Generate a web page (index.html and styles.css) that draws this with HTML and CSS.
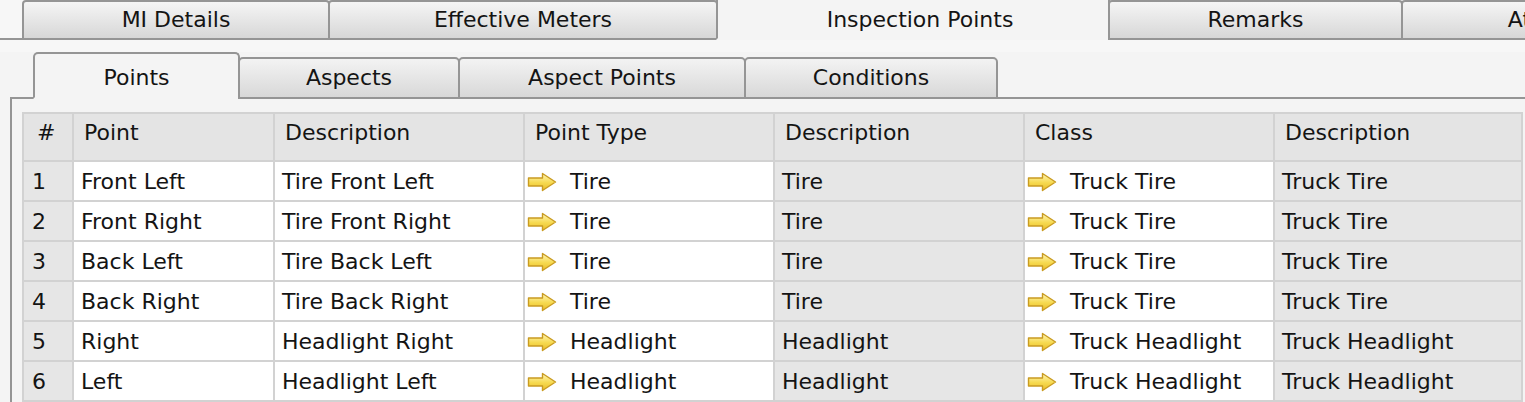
FILE: index.html
```html
<!DOCTYPE html>
<html lang="en">
<head>
  <meta charset="UTF-8">
  <title>Inspection Points</title>
  <meta name="viewport" content="width=device-width, initial-scale=1.0">
  <link rel="stylesheet" href="styles.css">
</head>
<body>

  <svg class="defs" width="0" height="0">
    <defs>
      <linearGradient id="arrow-fill" x1="0" y1="0" x2="0" y2="1">
        <stop offset="0" stop-color="#fff6b8"/>
        <stop offset="0.55" stop-color="#f6d94e"/>
        <stop offset="1" stop-color="#e9bd2a"/>
      </linearGradient>
      <symbol id="arrow" viewBox="0 0 30 20">
        <path d="M1.5 6 H15.5 V1.5 L28.5 10 L15.5 18.5 V14 H1.5 Z" fill="url(#arrow-fill)" stroke="#c99b22" stroke-width="1.4" stroke-linejoin="round"/>
      </symbol>
    </defs>
  </svg>

  <!-- onglets principaux -->
  <div class="tabs">
    <div class="tab tab-mi">MI Details</div>
    <div class="tab tab-meters">Effective Meters</div>
    <div class="tab tab-points active">Inspection Points</div>
    <div class="tab tab-remarks">Remarks</div>
    <div class="tab tab-attach">Attachments</div>
  </div>

  <div class="panel">
    <!-- sous-onglets -->
    <div class="subtabs">
      <div class="subtab sub-points active">Points</div>
      <div class="subtab sub-aspects">Aspects</div>
      <div class="subtab sub-apoints">Aspect Points</div>
      <div class="subtab sub-conditions">Conditions</div>
    </div>

    <div class="subpanel">
      <div class="grid">
        <div class="cell hd num">#</div>
        <div class="cell hd">Point</div>
        <div class="cell hd">Description</div>
        <div class="cell hd">Point Type</div>
        <div class="cell hd">Description</div>
        <div class="cell hd">Class</div>
        <div class="cell hd">Description</div>

        <div class="cell gray num">1</div>
        <div class="cell">Front Left</div>
        <div class="cell">Tire Front Left</div>
        <div class="cell link"><svg class="arrow"><use href="#arrow"/></svg>Tire</div>
        <div class="cell gray">Tire</div>
        <div class="cell link"><svg class="arrow"><use href="#arrow"/></svg>Truck Tire</div>
        <div class="cell gray">Truck Tire</div>

        <div class="cell gray num">2</div>
        <div class="cell">Front Right</div>
        <div class="cell">Tire Front Right</div>
        <div class="cell link"><svg class="arrow"><use href="#arrow"/></svg>Tire</div>
        <div class="cell gray">Tire</div>
        <div class="cell link"><svg class="arrow"><use href="#arrow"/></svg>Truck Tire</div>
        <div class="cell gray">Truck Tire</div>

        <div class="cell gray num">3</div>
        <div class="cell">Back Left</div>
        <div class="cell">Tire Back Left</div>
        <div class="cell link"><svg class="arrow"><use href="#arrow"/></svg>Tire</div>
        <div class="cell gray">Tire</div>
        <div class="cell link"><svg class="arrow"><use href="#arrow"/></svg>Truck Tire</div>
        <div class="cell gray">Truck Tire</div>

        <div class="cell gray num">4</div>
        <div class="cell">Back Right</div>
        <div class="cell">Tire Back Right</div>
        <div class="cell link"><svg class="arrow"><use href="#arrow"/></svg>Tire</div>
        <div class="cell gray">Tire</div>
        <div class="cell link"><svg class="arrow"><use href="#arrow"/></svg>Truck Tire</div>
        <div class="cell gray">Truck Tire</div>

        <div class="cell gray num">5</div>
        <div class="cell">Right</div>
        <div class="cell">Headlight Right</div>
        <div class="cell link"><svg class="arrow"><use href="#arrow"/></svg>Headlight</div>
        <div class="cell gray">Headlight</div>
        <div class="cell link"><svg class="arrow"><use href="#arrow"/></svg>Truck Headlight</div>
        <div class="cell gray">Truck Headlight</div>

        <div class="cell gray num">6</div>
        <div class="cell">Left</div>
        <div class="cell">Headlight Left</div>
        <div class="cell link"><svg class="arrow"><use href="#arrow"/></svg>Headlight</div>
        <div class="cell gray">Headlight</div>
        <div class="cell link"><svg class="arrow"><use href="#arrow"/></svg>Truck Headlight</div>
        <div class="cell gray">Truck Headlight</div>
      </div>
    </div>
  </div>

</body>
</html>
```

FILE: styles.css
```css
body {
  margin: 0;
  overflow: hidden;
  font-family: "DejaVu Sans", Verdana, sans-serif;
  font-size: 22px;
  line-height: 26px;
  color: #141414;
  background-color: #f7f7f7;
}

.defs {
  position: absolute;
}

/* onglets principaux */

.tabs {
  display: flex;
  padding-left: 22px;
  border-bottom: 2px solid #959595;
}

.tab {
  box-sizing: border-box;
  flex-shrink: 0;
  height: 40px;
  margin-bottom: -2px;
  padding-top: 5px;
  border: 2px solid #959595;
  border-radius: 4px 4px 0 0;
  background: linear-gradient(#f5f5f5, #d7d7d7);
  text-align: center;
  white-space: nowrap;
}

.tab + .tab {
  margin-left: -2px;
}

.tab.active {
  padding-top: 7px;
  border-top: none;
  border-radius: 0;
  border-bottom-color: #f4f4f4;
  background: #f4f4f4;
}

.tab-mi { width: 308px; }
.tab-meters { width: 390px; }
.tab-points { width: 394px; padding-left: 14px; }
.tab-remarks { width: 295px; }
.tab-attach { width: 354px; }

.panel {
  background-color: #f4f4f4;
}

/* sous-onglets */

.subtabs {
  display: flex;
  align-items: flex-end;
  margin: 12px 0 0 10px;
  padding-left: 23px;
  border-bottom: 2px solid #959595;
}

.subtab {
  box-sizing: border-box;
  flex-shrink: 0;
  height: 42px;
  margin-bottom: -2px;
  padding-top: 6px;
  border: 2px solid #959595;
  border-radius: 5px 5px 0 0;
  background: linear-gradient(#f3f3f3, #d8d8d8);
  text-align: center;
  white-space: nowrap;
}

.subtab + .subtab {
  margin-left: -2px;
}

.subtab.active {
  height: 47px;
  padding-top: 11px;
  border-bottom-color: #f4f4f4;
  background: #f4f4f4;
}

.sub-points { width: 207px; }
.sub-aspects { width: 222px; }
.sub-apoints { width: 288px; }
.sub-conditions { width: 254px; }

.subpanel {
  margin-left: 10px;
  padding: 13px 0 0 10px;
  border-left: 2px solid #959595;
}

/* grille */

.grid {
  display: grid;
  grid-template-columns: 48px 199px 248px 248px 248px 248px 246px;
  grid-template-rows: 46px repeat(6, 38px);
  gap: 2px;
  padding: 2px;
  width: max-content;
  background-color: #d2d2d2;
}

.cell {
  display: flex;
  align-items: center;
  padding: 2px 0 0 7px;
  overflow: hidden;
  white-space: nowrap;
  background-color: #fff;
}

.cell.hd {
  align-items: flex-start;
  padding: 6px 0 0 10px;
  background-color: #e4e4e4;
}

.cell.gray {
  background-color: #e6e6e6;
}

.cell.num {
  padding-left: 8px;
}

.cell.hd.num {
  padding-left: 13px;
}

.cell.link {
  padding-left: 2px;
}

.arrow {
  flex-shrink: 0;
  width: 30px;
  height: 20px;
  margin-right: 13px;
}
```
